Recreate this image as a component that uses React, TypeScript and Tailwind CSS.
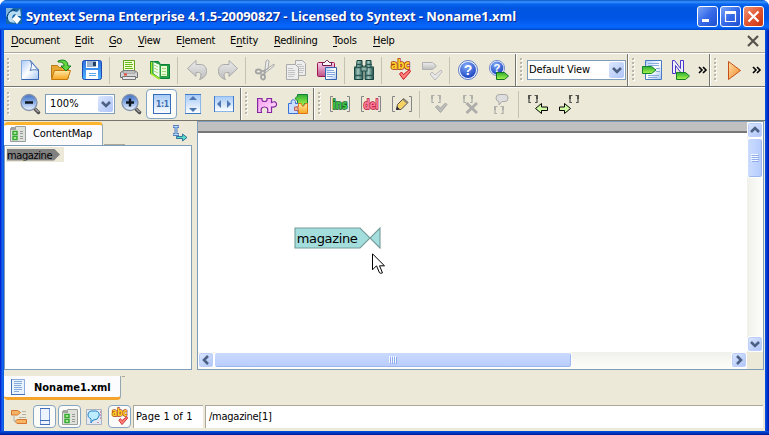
import React from "react";

type Kids = { children?: React.ReactNode };

const ui = "font-['DejaVu_Sans_Condensed','DejaVu_Sans',sans-serif] text-[11px] leading-[14px] whitespace-nowrap text-black";

function Svg({ w = 20, h = 20, children }: Kids & { w?: number; h?: number }) {
  return (
    <svg width={w} height={h} viewBox={`0 0 ${w} ${h}`} className="block shrink-0 overflow-visible">
      {children}
    </svg>
  );
}

function Cell({ children }: Kids) {
  return <div className="flex h-full w-[31px] shrink-0 items-center justify-center">{children}</div>;
}

function Grip() {
  return (
    <div className="flex h-full w-[10px] shrink-0 items-center justify-center">
      <svg width="4" height="24" viewBox="0 0 4 24">
        {[0, 4, 8, 12, 16, 20].map((y) => (
          <g key={y}>
            <rect x="1" y={y + 1} width="2" height="2" fill="#fff" />
            <rect x="0" y={y} width="2" height="2" fill="#bab7a8" />
          </g>
        ))}
      </svg>
    </div>
  );
}

function Sep() {
  return (
    <div className="flex h-full w-[6px] shrink-0 items-center">
      <div className="ml-[2px] h-[27px] w-px bg-[#c5c2b2]" />
    </div>
  );
}

function End() {
  return <div className="h-full w-[2px] shrink-0 border-r border-l border-r-white border-l-[#77756b]" />;
}

function Chevron({ dir = "down" }: { dir?: "down" | "up" | "left" | "right" }) {
  const d = { down: "M1 3l4 4 4-4", up: "M1 7l4-4 4 4", left: "M7 1L3 5l4 4", right: "M3 1l4 4-4 4" }[dir];
  return (
    <Svg w={10} h={10}>
      <path d={d} fill="none" stroke="#4d6185" strokeWidth="2.6" />
    </Svg>
  );
}

function Combo({ text, className, label }: { text: string; className: string; label: string }) {
  return (
    <div className={`flex shrink-0 items-center border border-[#7f9db9] bg-white ${className}`}>
      <span className={`${ui} flex-1 ${label}`}>{text}</span>
      <div className="m-px flex h-[16px] w-[15px] items-center justify-center rounded-[2px] bg-linear-to-br from-[#dce7ff] to-[#aec4f6]">
        <Chevron />
      </div>
    </div>
  );
}

function More() {
  return (
    <Svg w={9} h={8}>
      <path d="M1 1l3 3-3 3M5 1l3 3-3 3" fill="none" stroke="#000" strokeWidth="1.6" />
    </Svg>
  );
}

function AppIcon() {
  return (
    <Svg w={16} h={16}>
      <rect width="16" height="16" fill="#1766a8" />
      <path d="M0 0h7L3 4 0 9z" fill="#7fb4d8" />
      <path d="M4 14C0 10 2 4 7 3l4 1 3-3 1 7H9l1-2C7 6 5 9 7 12l2 3z" fill="#b7dcf2" />
      <path d="M6 11l4-4 5 4-4 5z" fill="#fff" />
      <path d="M1.500 11c-1-5 2-9 8-9" fill="none" stroke="#0d3c66" strokeDasharray="2 1" />
    </Svg>
  );
}

function CaptionButton({ kind }: { kind: "min" | "max" | "close" }) {
  const color = kind === "close" ? "from-[#ef9575] via-[#e25531] to-[#c93308]" : "from-[#7aa3f6] via-[#366ae8] to-[#2050cf]";
  return (
    <div className={`flex size-[21px] items-center justify-center rounded-[3px] border border-white bg-linear-to-br ${color}`}>
      <Svg w={19} h={19}>
        {kind === "min" && <rect x="4" y="12" width="7" height="3" fill="#fff" />}
        {kind === "max" && <path d="M4.5 5v9.5h10V5M4 5.5h11" fill="none" stroke="#fff" strokeWidth="1.2" />}
        {kind === "max" && <rect x="4" y="4" width="11" height="3" fill="#fff" />}
        {kind === "close" && <path d="M4.5 4.5l10 10M14.5 4.5l-10 10" stroke="#fff" strokeWidth="2.2" />}
      </Svg>
    </div>
  );
}

function Defs() {
  return (
    <svg width="0" height="0" className="absolute">
      <defs>
        <linearGradient id="paper" x1="0" y1="0" x2="1" y2="1">
          <stop offset="0" stopColor="#a9c9f8" />
          <stop offset=".5" stopColor="#fff" />
          <stop offset="1" stopColor="#a2c3f3" />
        </linearGradient>
        <linearGradient id="blue" x1="0" y1="0" x2="0" y2="1">
          <stop offset="0" stopColor="#a5c9f5" />
          <stop offset="1" stopColor="#fff" />
        </linearGradient>
        <linearGradient id="lens" x1="0" y1="0" x2="0" y2="1">
          <stop offset="0" stopColor="#3f6fc4" />
          <stop offset=".5" stopColor="#8db0e6" />
          <stop offset="1" stopColor="#f2f8ff" />
        </linearGradient>
        <linearGradient id="folder" x1="0" y1="0" x2="0" y2="1">
          <stop offset="0" stopColor="#ffe9a6" />
          <stop offset="1" stopColor="#f7a51d" />
        </linearGradient>
        <linearGradient id="disk" x1="0" y1="0" x2="0" y2="1">
          <stop offset="0" stopColor="#2f6fe0" />
          <stop offset="1" stopColor="#4eb7ff" />
        </linearGradient>
        <linearGradient id="green" x1="0" y1="0" x2="0" y2="1">
          <stop offset="0" stopColor="#2fae35" />
          <stop offset="1" stopColor="#a8f54a" />
        </linearGradient>
        <linearGradient id="orange" x1="0" y1="0" x2="1" y2="1">
          <stop offset="0" stopColor="#ffdfa8" />
          <stop offset="1" stopColor="#f18a27" />
        </linearGradient>
        <radialGradient id="ball" cx=".4" cy=".25" r=".8">
          <stop offset="0" stopColor="#83abf7" />
          <stop offset="1" stopColor="#1740bf" />
        </radialGradient>
        <linearGradient id="pink" x1="0" y1="0" x2="0" y2="1">
          <stop offset="0" stopColor="#fbd1ed" />
          <stop offset="1" stopColor="#bf4f86" />
        </linearGradient>
        <linearGradient id="violet" x1="0" y1="0" x2="1" y2="1">
          <stop offset="0" stopColor="#f79cf2" />
          <stop offset="1" stopColor="#ffe6fe" />
        </linearGradient>
        <linearGradient id="grey" x1="0" y1="0" x2="0" y2="1">
          <stop offset="0" stopColor="#ededed" />
          <stop offset="1" stopColor="#bdbdbd" />
        </linearGradient>
        <linearGradient id="binocular" x1="0" y1="0" x2="1" y2="0">
          <stop offset="0" stopColor="#2d5f58" />
          <stop offset=".4" stopColor="#a5c9bf" />
          <stop offset="1" stopColor="#23504b" />
        </linearGradient>
      </defs>
    </svg>
  );
}

const NewIcon = () => (
  <Svg>
    <path d="M1.5.5h9l8 9v10h-17z" fill="url(#paper)" stroke="#84a9df" />
    <path d="M1.500 19.500h17v-10" fill="none" stroke="#3763af" />
    <path d="M10 .500c2 3 2 6 0 10 3-1 6-1 8.500 0z" fill="#f4f9ff" stroke="#5378b8" />
  </Svg>
);
const OpenIcon = () => (
  <Svg>
    <path d="M.5 18V5.500h6l2 2h9V18z" fill="#e8a632" stroke="#b67a16" />
    <path d="M.5 19.500l3-9h16l-3 9z" fill="url(#folder)" stroke="#c5780c" />
    <path d="M7 1c5-2 10-1 10 5h3l-5 5-5-5h3c0-3-2-4-6-4z" fill="#63d33f" stroke="#168122" />
  </Svg>
);
const SaveIcon = () => (
  <Svg>
    <rect x=".5" y=".5" width="19" height="19" rx="2" fill="url(#disk)" stroke="#1c49b4" />
    <rect x="4" y="1" width="12" height="7" fill="#fff" />
    <rect x="5" y="1" width="9" height="6" fill="#9fb2cb" />
    <rect x="11" y="2" width="3" height="4" fill="#263f67" />
    <rect x="4" y="10" width="12" height="9" fill="#fff" />
    <path d="M7 13.500h7M7 15.500h7" stroke="#59a9ec" />
  </Svg>
);
const PrintIcon = () => (
  <Svg>
    <path d="M4.500 12V.5h11V12z" fill="#f4ffd6" stroke="#61a31a" />
    <path d="M6 2.500h7M6 4.500h8M6 6.500h7M6 8.500h8" stroke="#67b918" />
    <path d="M1.500 12.500l3-2h11l3 2v5h-17z" fill="#d5d5d5" stroke="#717171" />
    <path d="M4 11h12v2H4z" fill="#f5f5f5" stroke="#888" />
    <path d="M3.500 16.500h13v3h-13z" fill="#e7e7e7" stroke="#777" />
    <rect x="5" y="13.500" width="3" height="2" fill="#e54838" />
  </Svg>
);
const BookIcon = () => (
  <Svg>
    <path d="M.5 1.500h8l2 3h9v14h-9l-2-1-8-4z" fill="#20a54b" stroke="#078139" />
    <path d="M3 1.500l7 3v14l-7-5z" fill="#f4fff0" stroke="#269b3d" />
    <path d="M10.500 5.500h7v11h-7z" fill="#e7fad3" stroke="#259a3e" />
    <path d="M4 5l4 2M4 8l4 2M4 11l4 2M12 8.500h4M12 11.500h4M12 14.500h4" stroke="#a2d477" />
    <path d="M1.500 2v12l8 5" fill="none" stroke="#a8e926" strokeWidth="1.5" />
  </Svg>
);
const ArrowIcon = ({ flip = false }: { flip?: boolean }) => (
  <Svg>
    <g transform={flip ? "translate(20 0) scale(-1 1)" : undefined}>
      <path d="M.5 8.500L9 .500v4h4c5 0 6.500 3 6.500 7 0 4-3 7-7 8 2-3 2-7-1-7H9v4z" fill="url(#grey)" stroke="#a9a9a9" />
    </g>
  </Svg>
);
const CutIcon = () => (
  <Svg>
    <path d="M11 1l-1 9 3-1 1-8-1.500-1zM19 4l-10 7 1 2 9-7z" fill="#ededed" stroke="#a9a9a9" />
    <g fill="none" stroke="#a4a4a4" strokeWidth="1.800">
      <ellipse cx="3.500" cy="11.500" rx="2.800" ry="2" />
      <ellipse cx="8" cy="17" rx="2" ry="2.500" />
      <path d="M6 11.500l4-1-1 5" />
    </g>
  </Svg>
);
const CopyIcon = () => (
  <Svg>
    {[0, 1].map((i) => (
      <g key={i} transform={i ? "translate(0 4)" : "translate(9 0)"}>
        <path d={i ? "M.5.500h9l3 3v12H.5z" : "M.5.500h7l3 3v12H.5z"} fill="#ededed" stroke="#aaa" />
        <path d="M2 4.500h5M2 6.500h7M2 8.500h7M2 10.500h7M2 12.500h6" stroke="#c3c3c3" />
      </g>
    ))}
  </Svg>
);
const PasteIcon = () => (
  <Svg>
    <rect x=".5" y="2.500" width="17" height="14" rx="1" fill="url(#pink)" stroke="#9d164f" />
    <path d="M5.500 5.500v-3h2l2-2h1l2 2h2v3z" fill="#f6f6f6" stroke="#701b4a" />
    <path d="M8.500 7.500h11v12h-11z" fill="url(#paper)" stroke="#3662ad" />
    <path d="M10 10.500h7M10 12.500h8M10 14.500h8M10 16.500h6" stroke="#86a7df" />
  </Svg>
);
const BinocularIcon = () => (
  <Svg>
    <path d="M3 .500h5v5h1v14H.500V7h2z" fill="url(#binocular)" stroke="#194540" />
    <path d="M12 .500h5V7h2.500v12.500H11v-14h1z" fill="url(#binocular)" stroke="#194540" />
    <path d="M2 4.500h6M12 4.500h6M0 7.500h8M12 7.500h8M0 15.500h8M12 15.500h8" stroke="#2a5a53" strokeWidth="1.400" />
    <rect x="7" y="7" width="6" height="4" fill="#8eaea5" stroke="#23524b" />
  </Svg>
);
const SpellIcon = () => (
  <Svg>
    <text x="0" y="9" fontSize="12" fontWeight="700" fontFamily="DejaVu Sans Condensed" textLength="19" lengthAdjust="spacingAndGlyphs" stroke="#a83810" strokeWidth="1.700" fill="#ffd42c" paintOrder="stroke">abc</text>
    <path d="M8.500 14l2-2 2 2.500 6-5 1 2-7 8z" fill="#ff7f7b" stroke="#c71822" />
  </Svg>
);
const TagCheckIcon = () => (
  <Svg>
    <path d="M.5 2.500h10l4 3.500-4 3.500H.5z" fill="url(#grey)" stroke="#b1b1b1" />
    <path d="M8 14l2-2 3 3 6-5 1 2-7 8z" fill="#e7e7e7" stroke="#b9b9b9" />
  </Svg>
);
const HelpBall = () => (
  <g>
    <circle cx="10" cy="10" r="9.500" fill="#f5f9ff" stroke="#5d7ac8" />
    <circle cx="10" cy="10" r="8" fill="url(#ball)" />
    <text x="10" y="15" textAnchor="middle" fontSize="14" fontWeight="700" fontFamily="Liberation Sans" fill="#fff">?</text>
  </g>
);
const HelpTagIcon = () => (
  <Svg>
    <g transform="scale(.8)"><HelpBall /></g>
    <path d="M7.500 12.500h8l4 3.500-4 3.500h-8z" fill="url(#green)" stroke="#147027" />
  </Svg>
);
const DocTagIcon = () => (
  <Svg>
    <path d="M3.500.500h16v19h-16z" fill="url(#paper)" stroke="#497bc0" />
    <path d="M6 3.500h11M6 5.500h11M14 8.500h4M14 11.500h4M6 15.500h11M6 17.500h9" stroke="#89addd" />
    <path d="M.5 6.500h9l4.500 3.500-4.500 3.500h-9z" fill="url(#green)" stroke="#14842a" />
  </Svg>
);
const NTagIcon = () => (
  <Svg>
    <path d="M1.500 13.500V.500h2l6 8v-8h3v13h-2l-6-8v8z" fill="#edf0ff" stroke="#4b35c4" />
    <path d="M5.500 12.500h9l4 3.500-4 3.500h-9z" fill="url(#green)" stroke="#147d25" />
  </Svg>
);
const PlayIcon = () => (
  <Svg>
    <path d="M4.500 1.500l12 9-12 9z" fill="url(#orange)" stroke="#c85018" />
  </Svg>
);
const ZoomIcon = ({ plus = false }: { plus?: boolean }) => (
  <Svg>
    <path d="M15 15l3.500 3.500" stroke="#555" strokeWidth="3.500" strokeLinecap="round" />
    <path d="M15 14.500l3.500 3.500" stroke="#ddd" />
    <circle cx="9" cy="8.500" r="8" fill="url(#lens)" stroke="#8593ac" strokeWidth="1.300" />
    <path d={plus ? "M5 8.500h8M9 4.500v8" : "M5 8.500h8"} stroke="#101824" strokeWidth="2.400" />
  </Svg>
);
const ActualIcon = () => (
  <Svg>
    <rect x="1.500" y=".500" width="17" height="19" fill="url(#blue)" stroke="#356fbb" />
    <text x="4" y="13" fontSize="8.500" fontWeight="700" fontFamily="DejaVu Sans Condensed" textLength="13" fill="#3b6eae">1:1</text>
  </Svg>
);
const HeightIcon = () => (
  <Svg>
    <rect x="2.500" y=".500" width="15" height="19" fill="url(#blue)" stroke="#8bb6ea" />
    <path d="M2 .500h16M2 19.500h16" stroke="#3d7bc8" />
    <path d="M6 6l4-4 4 4zM6 14l4 4 4-4z" fill="#4d76b4" />
  </Svg>
);
const WidthIcon = () => (
  <Svg>
    <rect x=".500" y="2.500" width="19" height="15" fill="url(#blue)" stroke="#8bb6ea" />
    <path d="M.500 2v16M19.500 2v16" stroke="#3d7bc8" />
    <path d="M7 6l-4 4 4 4zM13 6l4 4-4 4z" fill="#4d76b4" />
  </Svg>
);
const PuzzleIcon = () => (
  <Svg>
    <path d="M.6 4.500h4.400q-.5 3 2.500 3t2.500-3h4.500v4q4.500-2 5 1.500t-5 3v5.500h-4q1.500-5.500-3-5.500t-3 5.500H.600z" fill="url(#violet)" stroke="#85279f" strokeWidth="1.200" />
  </Svg>
);
const PuzzlesIcon = () => (
  <Svg>
    <path d="M9.500.500h10v9h-3c-1 3-3 3-4 0h-3v-3c-3-1-3-3 0-4z" fill="url(#green)" stroke="#16803b" />
    <path d="M.500 9.500h3c-2-5 5-5 4 0h3v4c-3-1-4 2-1 3l1 3h-10z" fill="#cadeff" stroke="#386fdb" />
    <path d="M10.500 9.500h3c0 4 3 3 4 0h2v10h-9v-3c-4 0-4-4 0-4z" fill="url(#folder)" stroke="#df7411" />
    <path d="M6.500 13h3.500v3.500H6.500z" fill="#fbb985" stroke="#b45e70" />
  </Svg>
);
const Word = ({ text, edge, fill }: { text: string; edge: string; fill: string }) => (
  <Svg>
    <path d="M3 2.500H.500v15H3M17 2.500h2.500v15H17" fill="none" stroke="#858585" />
    <text x="2.500" y="14.500" fontSize="13" fontWeight="700" fontFamily="DejaVu Sans Condensed" textLength="15" lengthAdjust="spacingAndGlyphs" fill={fill} stroke={edge} strokeWidth="1.600" paintOrder="stroke">{text}</text>
  </Svg>
);
const PencilIcon = () => (
  <Svg>
    <path d="M3 2.500H.500v15H3M17 2.500h2.500v15H17" fill="none" stroke="#858585" />
    <path d="M4.500 15.500l1-5 6-6 4.500 4-7 7z" fill="#f4d363" stroke="#514a50" />
    <path d="M11 5l4.500 4" stroke="#8d8678" strokeWidth="2" />
    <path d="M4 16l3.500-1-2.500-2.500z" fill="#26203d" />
  </Svg>
);

function Brackets({ x, y, color }: { x: number; y: number; color: string }) {
  return (
    <g transform={`translate(${x} ${y})`} fill="none" stroke={color}>
      <path d="M1 0v4M9 0v4" strokeWidth="2" />
      <path d="M1 4v4M9 4v4" strokeWidth="2" opacity=".65" />
      <path d="M1 .500h2.500M9 .500H6.500M1 7.500h2M9 7.500H7" />
    </g>
  );
}
const ReviewIcon = ({ kind }: { kind: "check" | "cross" | "bubble" }) => (
  <Svg>
    {kind === "check" && <Brackets x={2} y={1} color="#b0b0aa" />}
    {kind === "cross" && <Brackets x={3} y={1} color="#b0b0aa" />}
    {kind === "bubble" && <Brackets x={3} y={12} color="#b0b0aa" />}
    {kind === "check" && <path d="M6.500 13l2-1.500 3 2.500 5-5 1.500 1.500-6.500 8z" fill="#bdbdba" stroke="#a5a5a5" />}
    {kind === "cross" && <path d="M6.500 9l10.500 10M17 9L6.500 19" stroke="#adadaa" strokeWidth="3" />}
    {kind === "bubble" && <path d="M8 .500h6q3 0 3 3.500t-3 3.500h-3l-3 3.500V7.500q-3-.500-3-3.500t3-3.500z" fill="#ddd" stroke="#aaa" />}
  </Svg>
);
const MoveIcon = ({ right = false }: { right?: boolean }) => (
  <Svg>
    <Brackets x={right ? 10 : 0} y={1} color="#555550" />
    <path d={right ? "M.500 13h5V9.500l6 5-6 5v-3h-5z" : "M19.500 13h-6V9.500l-6 5 6 5v-3h6z"} fill="#d0fba5" stroke="#000" />
  </Svg>
);

const MapIcon = () => (
  <Svg w={16} h={16}>
    <path d="M.500 15.500v-13h5v-2h10v15z" fill="#dfe2da" stroke="#9a9f9f" />
    <path d="M1 1h5v3H1z" fill="#a0a3a0" />
    <path d="M3 5.500h4v3H3zM3 10.500h4v3H3z" fill="#c8ffb0" stroke="#35a932" strokeWidth="1.500" />
    <path d="M10 5.500h3M10 7.500h3M10 10.500h3M10 12.500h3" stroke="#999" />
  </Svg>
);
const SyncIcon = () => (
  <Svg w={16} h={16}>
    <path d="M1 1.500h6M1 9.500h6M4 2v8" fill="none" stroke="#5680b9" strokeWidth="3" />
    <path d="M1.500 1.500h5M4 2v7M1.500 9.500h5" fill="none" stroke="#b7d7fc" />
    <path d="M4.500 11.500h6v-2.500l4.500 3.500-4.500 3.500v-2.500h-6z" fill="#55dfc2" stroke="#3371a1" />
  </Svg>
);
const DocumentIcon = () => (
  <Svg w={14} h={16}>
    <path d="M.5.500h13v15H.500z" fill="#e9f2ff" stroke="#8bace0" />
    <path d="M.500 0v16M0 15.500h14" stroke="#4672b9" />
    <path d="M3 2.500h8M3 4.500h8M3 6.500h7M3 8.500h8M3 10.500h8M3 12.500h5" stroke="#86aadc" />
  </Svg>
);

function ScrollKey({ dir }: { dir: "up" | "down" | "left" | "right" }) {
  return (
    <div className="flex size-[16px] shrink-0 items-center justify-center rounded-[3px] border border-white bg-linear-to-br from-[#dbe6ff] to-[#adc4f8] shadow-[inset_0_0_0_1px_#bdcff8]">
      <Chevron dir={dir} />
    </div>
  );
}

const menus: [string, number, string][] = [
  ["Document", 0, "w-[49px] tracking-[-0.32px]"],
  ["Edit", 0, "w-[19px] tracking-[-0.1px]"],
  ["Go", 0, "w-[14px] tracking-[-0.4px]"],
  ["View", 0, "w-[23px] tracking-[-0.3px]"],
  ["Element", 1, "w-[39px] tracking-[-0.25px]"],
  ["Entity", 1, "w-[29px] tracking-[-0.1px]"],
  ["Redlining", 0, "w-[44px] tracking-[-0.25px]"],
  ["Tools", 0, "w-[25px] tracking-[-0.05px]"],
  ["Help", 0, "w-[24px] tracking-[-0.3px]"],
];

const activeTool = "flex shrink-0 items-center justify-center rounded-[4px] border border-[#86a5c4] bg-[#fbfbf8]";

export default function App() {
  return (
    <div className="flex h-[435px] w-[769px] flex-col overflow-hidden rounded-t-[7px] bg-[linear-gradient(90deg,#0019cf_0,#0831d9_1px,#166aee_2px,#0855dd_4px,#0855dd_765px,#0046e0_766px,#0019a8_769px)]">
      <Defs />
      <header className="flex h-[30px] shrink-0 items-center bg-[linear-gradient(180deg,#0958c7_0,#3a93ff_2px,#0866f0_4px,#0055e0_8px,#0055e5_18px,#0668ff_27px,#0048c8_30px)] pt-[2px] pr-[5px] pl-[6px]">
        <AppIcon />
        <h1 className="ml-[4px] flex-1 font-['Open_Sans','Noto_Sans',sans-serif] text-[13px] leading-[18px] font-bold tracking-[-0.09px] whitespace-nowrap text-white [text-shadow:1px_1px_#0c2587]">
          Syntext Serna Enterprise 4.1.5-20090827 - Licensed to Syntext - Noname1.xml
        </h1>
        <div className="flex gap-[2px]">
          <CaptionButton kind="min" />
          <CaptionButton kind="max" />
          <CaptionButton kind="close" />
        </div>
      </header>

      <main className="mx-[4px] flex h-[401px] shrink-0 flex-col bg-[#ece9d8]">
        <nav className="flex h-[23px] shrink-0 items-center gap-[15px] border-b border-[#aca899] pr-[6px] pl-[7px]">
          {menus.map(([name, at, style]) => (
            <span key={name} className={`${ui} shrink-0 ${style}`}>
              {name.slice(0, at)}
              <span className="underline underline-offset-[2px]">{name[at]}</span>
              {name.slice(at + 1)}
            </span>
          ))}
          <div className="ml-auto">
            <Svg w={12} h={12}>
              <path d="M1 1l10 10M11 1L1 11" stroke="#55534e" strokeWidth="2.200" />
            </Svg>
          </div>
        </nav>

        <div className="flex h-[34px] shrink-0 items-center border-t border-b border-t-white border-b-[#77756b]">
          <Grip />
          <Cell><NewIcon /></Cell>
          <Cell><OpenIcon /></Cell>
          <Cell><SaveIcon /></Cell>
          <Sep />
          <Cell><PrintIcon /></Cell>
          <Cell><BookIcon /></Cell>
          <Sep />
          <Cell><ArrowIcon /></Cell>
          <Cell><ArrowIcon flip /></Cell>
          <Sep />
          <Cell><CutIcon /></Cell>
          <Cell><CopyIcon /></Cell>
          <Cell><PasteIcon /></Cell>
          <Sep />
          <Cell><BinocularIcon /></Cell>
          <Sep />
          <Cell><SpellIcon /></Cell>
          <Cell><TagCheckIcon /></Cell>
          <Sep />
          <div className="-ml-px flex h-full w-[63px] shrink-0">
            <Cell><Svg><HelpBall /></Svg></Cell>
            <Cell><HelpTagIcon /></Cell>
          </div>
          <End />
          <Grip />
          <Combo text="Default View" label="tracking-[-0.15px]" className="h-[20px] w-[99px] pl-[1px]" />
          <div className="w-px" />
          <End />
          <Grip />
          <div className="flex h-full w-[70px] shrink-0 items-center pl-[3px]">
            <DocTagIcon />
            <div className="ml-[9px]"><NTagIcon /></div>
            <div className="ml-[7px]"><More /></div>
          </div>
          <End />
          <Grip />
          <div className="flex h-full items-center pl-[3px]">
            <PlayIcon />
            <div className="ml-[8px]"><More /></div>
          </div>
        </div>

        <div className="flex h-[34px] shrink-0 items-center border-t border-b border-t-white border-b-[#77756b]">
          <Grip />
          <Cell><ZoomIcon /></Cell>
          <Combo text="100%" label="tracking-[0.1px]" className="h-[20px] w-[70px] pl-[4px]" />
          <Cell><ZoomIcon plus /></Cell>
          <div className={`${activeTool} h-[30px] w-[31px]`}><ActualIcon /></div>
          <Cell><HeightIcon /></Cell>
          <Cell><WidthIcon /></Cell>
          <div className="w-px" />
          <End />
          <Grip />
          <div className="-ml-px flex h-full shrink-0">
            <Cell><PuzzleIcon /></Cell>
            <Cell><PuzzlesIcon /></Cell>
          </div>
          <End />
          <Grip />
          <div className="-ml-px flex h-full">
            <Cell><Word text="ins" edge="#17602a" fill="#3fc548" /></Cell>
            <Cell><Word text="del" edge="#b50d3a" fill="#ff7f9a" /></Cell>
            <Cell><PencilIcon /></Cell>
            <Sep />
            <Cell><ReviewIcon kind="check" /></Cell>
            <Cell><ReviewIcon kind="cross" /></Cell>
            <Cell><ReviewIcon kind="bubble" /></Cell>
            <Sep />
            <Cell><MoveIcon /></Cell>
            <Cell><MoveIcon right /></Cell>
          </div>
        </div>

        <div className="flex h-[249px] shrink-0">
          <aside className="flex w-[188px] shrink-0 flex-col">
            <div className="flex h-[24px] shrink-0 items-end">
              <div className="flex h-[23px] w-[99px] items-center rounded-t-[4px] border-t-[3px] border-r border-t-[#ffb52b] border-r-[#91a7b4] bg-[#fcfcfe] pl-[6px]">
                <div className="-mt-[3px]"><MapIcon /></div>
                <span className={`${ui} -mt-[2px] ml-[7px] tracking-[-0.1px]`}>ContentMap</span>
              </div>
              <div className="ml-px h-px w-[21px] bg-[#aca899]" />
              <div className="mb-[4px] ml-auto pr-[4px]"><SyncIcon /></div>
            </div>
            <div className="flex-1 border border-[#7f9db9] bg-white pt-px pl-[1px]">
              <div className="flex h-[15px] w-[58px] items-center bg-[#ece9d8] pl-px">
                <div className={`${ui} h-[12px] w-[53px] bg-[#808080] leading-[12px] tracking-[-0.4px] [clip-path:polygon(0_0,47px_0,100%_50%,47px_100%,0_100%)]`}>
                  magazine
                </div>
              </div>
            </div>
          </aside>

          <section className="ml-[5px] flex w-[567px] shrink-0 flex-col border border-[#7f9db9] bg-white">
            <div className="flex h-[230px]">
              <div className="w-[549px] bg-white">
                <div className="h-[11px] border-b-2 border-[#777] bg-[#c0c0c0]" />
                <div className="relative pt-[94px] pl-[96px]">
                  <svg width="87" height="22" viewBox="0 0 87 22" className="block">
                    <path d="M1 1H66l10 10-10 10H1zM86 1v20L76 11z" fill="#a3dedd" stroke="#729b99" strokeWidth="1.100" />
                    <text x="2.800" y="15.500" fontFamily="DejaVu Sans" fontSize="13" textLength="61">magazine</text>
                  </svg>
                  <svg width="14" height="22" viewBox="0 0 14 22" className="absolute top-[120px] left-[174px]">
                    <path d="M.500.800v16l4-4 3 7q1 1 3 0l-3-7h5z" fill="#fff" stroke="#000" />
                  </svg>
                </div>
              </div>
              <div className="flex w-[16px] flex-col bg-linear-to-r from-[#f1f1eb] to-[#fdfdfb]">
                <ScrollKey dir="up" />
                <div className="flex h-[40px] w-[16px] items-center justify-center rounded-[3px] border border-white bg-linear-to-r from-[#cbdcff] to-[#b5cbfc] shadow-[inset_-1px_-1px_0_#9bb6ec]">
                  <Svg w={8} h={9}><path d="M0 .500h7M0 2.500h7M0 4.500h7M0 6.500h7" stroke="#f4f7ff" /><path d="M1 1.500h7M1 3.500h7M1 5.500h7M1 7.500h7" stroke="#8fadea" /></Svg>
                </div>
                <div className="mt-auto"><ScrollKey dir="down" /></div>
              </div>
            </div>
            <div className="flex h-[17px] bg-linear-to-b from-[#f1f1eb] to-[#fdfdfb]">
              <ScrollKey dir="left" />
              <div className="flex h-[16px] w-[358px] items-center justify-center rounded-[3px] border border-white bg-linear-to-b from-[#cad9fe] to-[#b9cdfb] shadow-[inset_-1px_-1px_0_#9bb6ec]">
                <Svg w={9} h={8}><path d="M.500 0v7M2.500 0v7M4.500 0v7M6.500 0v7" stroke="#f4f7ff" /><path d="M1.500 1v7M3.500 1v7M5.500 1v7M7.500 1v7" stroke="#8fadea" /></Svg>
              </div>
              <div className="ml-auto"><ScrollKey dir="right" /></div>
              <div className="h-full w-[16px] bg-[#ece9d8]" />
            </div>
          </section>
        </div>

        <div className="flex h-[35px] shrink-0 items-start pt-[6px]">
          <div className="flex h-[24px] w-[117px] items-center rounded-b-[4px] border-r border-b-[3px] border-r-[#91a7b4] border-b-[#f4a42b] bg-[#fcfcfe] pl-[7px]">
            <DocumentIcon />
            <span className={`${ui} ml-[9px] pt-[3px] font-bold tracking-[0.02px]`}>Noname1.xml</span>
          </div>
          <div className="ml-px h-px w-[3px] bg-[#aca899]" />
        </div>

        <footer className="flex h-[26px] shrink-0 items-start">
          <div className="flex h-[23px] w-[29px] items-center pl-[7px]">
            <Svg w={17} h={16}>
              <path d="M.500 1.500h6l3 2-3 2.500h-6zM6 10.500h9.500v4H6l-2-2z" fill="#f8b365" stroke="#d3762e" />
              <path d="M11 2.500h4M11 5.500h4M3 7v5h2M8 8.500h7" stroke="#b5b3a6" fill="none" />
            </Svg>
          </div>
          <div className={`${activeTool} h-[23px] w-[23px]`}>
            <Svg w={12} h={17}><path d="M1.500.500h9v16h-9z" fill="#edf4ff" stroke="#7898d5" /><path d="M1 .500h10M1 12.500h10M1 16.500h10" stroke="#426db9" /></Svg>
          </div>
          <div className={`${activeTool} ml-[2px] h-[23px] w-[23px]`}><MapIcon /></div>
          <div className="flex h-[23px] w-[27px] items-center justify-center">
            <Svg w={17} h={16}>
              <path d="M.500.500h15v15H.500z" fill="#e3e8f2" stroke="#a9b3c2" />
              <path d="M5 2h5q4 1 3 5t-5 4H7l-2 3V10Q1 8 2 5t3-3z" fill="#bcecff" stroke="#2683c5" />
              <path d="M11 13.500h3M14.500 2v9" stroke="#c996ab" strokeDasharray="2 1" />
            </Svg>
          </div>
          <div className={`${activeTool} h-[23px] w-[23px]`}><div className="scale-[.8]"><SpellIcon /></div></div>
          <div className="ml-[2px] flex h-[23px] w-[70px] items-center border-t border-l border-[#aca899] bg-white pl-[2px]">
            <span className={`${ui} tracking-[0.1px]`}>Page 1 of 1</span>
          </div>
          <div className="ml-[2px] flex h-[23px] w-[558px] items-center border-t border-l border-[#aca899] bg-white pl-[3px]">
            <span className={`${ui} tracking-[-0.25px]`}>/magazine[1]</span>
          </div>
        </footer>
      </main>
      <div className="h-[4px] bg-linear-to-b from-[#0855dd] to-[#00139b]" />
    </div>
  );
}
